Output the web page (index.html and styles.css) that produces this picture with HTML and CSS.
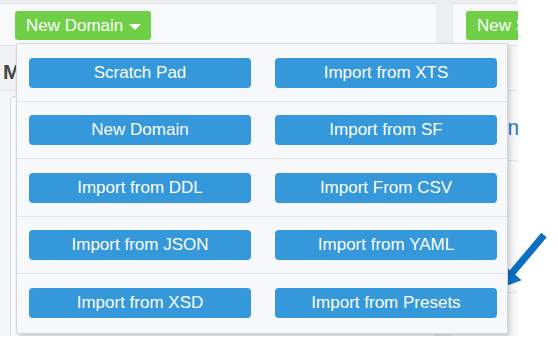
FILE: index.html
```html
<!DOCTYPE html>
<html>
<head>
<meta charset="utf-8">
<link rel="stylesheet" href="styles.css">
</head>
<body>
<div class="app">
  <div class="col col-left">
    <div class="topbar">
      <div class="dd-wrap">
        <button class="btn-green">New Domain <span class="caret"></span></button>
        <div class="dropdown">
          <div class="dd-row">
            <button class="dd-btn">Scratch Pad</button>
            <button class="dd-btn">Import from XTS</button>
          </div>
          <div class="dd-row">
            <button class="dd-btn">New Domain</button>
            <button class="dd-btn">Import from SF</button>
          </div>
          <div class="dd-row">
            <button class="dd-btn">Import from DDL</button>
            <button class="dd-btn">Import From CSV</button>
          </div>
          <div class="dd-row">
            <button class="dd-btn">Import from JSON</button>
            <button class="dd-btn">Import from YAML</button>
          </div>
          <div class="dd-row">
            <button class="dd-btn">Import from XSD</button>
            <button class="dd-btn">Import from Presets</button>
          </div>
        </div>
      </div>
    </div>
    <div class="section">
      <h2 class="heading">Models</h2>
      <div class="panel">
        <div class="card"></div>
      </div>
    </div>
  </div>
  <div class="col col-right">
    <div class="topbar topbar-right">
      <button class="btn-green">New Schema</button>
    </div>
    <div class="rlist">
      <div class="ritem">Item</div>
      <div class="ritem ritem-empty"></div>
    </div>
  </div>
</div>
<svg class="arrow" width="558" height="346" viewBox="0 0 558 346">
  <polygon points="541.3,232.7 509.8,270.2 503.4,264.7 498,289 521.6,280.3 515.2,274.8 546.7,237.3" fill="#0b70c2"/>
</svg>
</body>
</html>
```

FILE: styles.css
```css
html, body {
  margin: 0;
  padding: 0;
}
body {
  width: 558px;
  height: 346px;
  overflow: hidden;
  position: relative;
  background: #ffffff;
  font-family: "Liberation Sans", Arial, sans-serif;
}
.app {
  width: 518px;
  height: 336px;
  box-sizing: border-box;
  padding-top: 3px;
  background: #eceef1;
  display: flex;
  gap: 17px;
  overflow: hidden;
}
.col {
  flex: none;
}
.col-left {
  width: 436px;
  background: #f1f2f5;
}
.col-right {
  flex: 1;
  min-width: 0;
  background: #f7f8fa;
  overflow: hidden;
}
.topbar {
  display: flex;
  align-items: flex-start;
  border-top: 1px solid #e1e3e6;
  border-bottom: 1px solid #dcdee2;
  background: #f8f9fb;
  padding: 7px 0 5px 15px;
}
.topbar-right {
  padding-left: 13px;
}
.dd-wrap {
  position: relative;
}
.btn-green {
  height: 29px;
  display: flex;
  align-items: center;
  white-space: nowrap;
  background: #6fcf47;
  color: #ffffff;
  border: 0;
  border-radius: 3px;
  padding: 0 10px 0 11px;
  font-family: "Liberation Sans", Arial, sans-serif;
  font-size: 17px;
}
.caret {
  display: inline-block;
  width: 0;
  height: 0;
  margin-left: 6px;
  margin-top: 2px;
  border-left: 6px solid transparent;
  border-right: 6px solid transparent;
  border-top: 6px solid #ffffff;
}
.dropdown {
  position: absolute;
  top: calc(100% + 3px);
  left: 1px;
  width: 492px;
  box-sizing: border-box;
  background: #f7f8fa;
  border: 1px solid #d3d6da;
  border-radius: 2px;
  box-shadow: 2px 3px 5px rgba(0, 0, 0, 0.18);
  z-index: 10;
}
.dd-row {
  display: grid;
  grid-template-columns: 222px 222px;
  column-gap: 24px;
  padding: 13.5px 0 13px 12px;
  border-bottom: 1px solid #e3e5e8;
}
.dd-row:last-child {
  border-bottom: 0;
  padding-bottom: 15px;
}
.dd-btn {
  height: 30px;
  padding: 0;
  border: 0;
  border-radius: 4px;
  background: #3498db;
  color: #ffffff;
  font-family: "Liberation Sans", Arial, sans-serif;
  font-size: 17px;
  text-align: center;
}
.section {
  padding: 13.5px 0 0 3px;
}
.heading {
  margin: 0 0 6.5px;
  font-family: "Liberation Sans", Arial, sans-serif;
  font-weight: bold;
  font-size: 21px;
  line-height: 24px;
  color: #474747;
}
.panel {
  margin-left: -3px;
  border-top: 1px solid #e0e2e5;
  padding: 5px 0 0 10px;
  background: #f5f6f8;
}
.card {
  height: 300px;
  border: 1px solid #d6d8dc;
  border-radius: 4px;
  background: #fafbfc;
}
.rlist {
  margin-top: 44px;
  border-top: 1px solid #e1e3e6;
}
.ritem {
  padding: 23.5px 0 19px 30px;
  border-bottom: 1px solid #e1e3e6;
  font-size: 22px;
  line-height: 26px;
  color: #2f7fc2;
  white-space: nowrap;
}
.ritem-empty {
  padding: 0;
  height: 131px;
}
.arrow {
  position: absolute;
  left: 0;
  top: 0;
  pointer-events: none;
}
```
